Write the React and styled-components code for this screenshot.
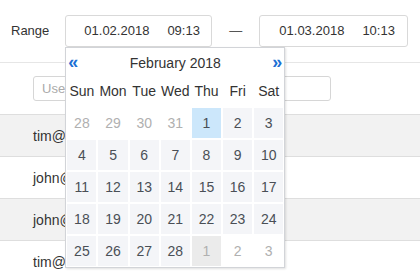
import React from "react";
import styled, { createGlobalStyle } from "styled-components";

const Global = createGlobalStyle`
  html, body { margin: 0; padding: 0; background: #fff; }
  body { font-family: "Liberation Sans", Arial, sans-serif; color: #333; }
`;

const Page = styled.div`
  width: 420px;
  height: 280px;
  overflow: hidden;
  position: relative;
`;

const Toolbar = styled.div`
  display: flex;
  align-items: center;
  height: 63px;
  padding: 15px 0 16px 11px;
  box-sizing: border-box;
  border-bottom: 1px solid #e6e6e6;
`;

const Label = styled.span`
  font-size: 13px;
  color: #333;
  margin-right: 16px;
`;

const Field = styled.div`
  position: relative;
`;

const DateBox = styled.div`
  display: flex;
  align-items: center;
  gap: 18px;
  width: ${(p) => p.$w}px;
  height: 32px;
  box-sizing: border-box;
  padding-left: ${(p) => p.$pl}px;
  border: 1px solid #d9d9d9;
  border-radius: 3px;
  font-size: 13px;
  color: #333;
  background: #fff;
`;

const Dash = styled.span`
  font-size: 13px;
  color: #555;
  margin: 0 17px;
`;

const Filter = styled.div`
  padding: 13px 0 13px 33px;
`;

const SearchInput = styled.input`
  display: block;
  width: 298px;
  height: 25px;
  box-sizing: border-box;
  border: 1px solid #d6d6d6;
  border-radius: 3px;
  padding: 0 8px;
  font-family: "Liberation Sans", Arial, sans-serif;
  font-size: 13px;
  outline: none;
  &::placeholder { color: #aaa; }
`;

const Table = styled.div`
  border-top: 1px solid #dedede;
`;

const Row = styled.div`
  display: flex;
  align-items: center;
  height: 41px;
  padding-left: 33px;
  border-bottom: 1px solid #dedede;
  background: ${(p) => (p.$alt ? "#f2f2f2" : "#fff")};
  font-size: 14px;
  color: #333;
`;

const Popup = styled.div`
  position: absolute;
  top: 32px;
  left: 0;
  width: 220px;
  box-sizing: border-box;
  background: #fff;
  border: 1px solid #d2d4d8;
  box-shadow: 1px 1px 2px rgba(0, 0, 0, 0.12);
  padding: 0 1px 1px 1px;
  z-index: 10;
`;

const Header = styled.div`
  display: flex;
  align-items: center;
  justify-content: space-between;
  height: 30px;
  padding: 0 1px;
`;

const Nav = styled.span`
  color: #1c6fd4;
  font-size: 18px;
  font-weight: bold;
  line-height: 1;
  margin-top: -2px;
`;

const Title = styled.span`
  font-size: 14px;
  color: #333;
`;

const Grid = styled.div`
  display: grid;
  grid-template-columns: repeat(7, 1fr);
  column-gap: 2px;
  row-gap: ${(p) => p.$rg}px;
  margin-top: ${(p) => p.$mt}px;
`;

const WeekDay = styled.div`
  height: 26px;
  display: flex;
  align-items: center;
  justify-content: center;
  font-size: 14px;
  color: #333;
`;

const Cell = styled.div`
  height: 30px;
  display: flex;
  align-items: center;
  justify-content: center;
  font-size: 14px;
  color: ${(p) => (p.$muted ? "#b0b0b0" : "#4a4f56")};
  background: ${(p) =>
    p.$selected ? "#cce7fb" : p.$today ? "#ebebeb" : p.$muted ? "#fff" : "#f4f5f8"};
`;

const days = [
  [28, "m"], [29, "m"], [30, "m"], [31, "m"], [1, "s"], [2], [3],
  [4], [5], [6], [7], [8], [9], [10],
  [11], [12], [13], [14], [15], [16], [17],
  [18], [19], [20], [21], [22], [23], [24],
  [25], [26], [27], [28], [1, "t"], [2, "m"], [3, "m"],
];

const weekDays = ["Sun", "Mon", "Tue", "Wed", "Thu", "Fri", "Sat"];

const rows = ["tim@mail.com", "john@mail.com", "john@mail.com", "tim@mail.com"];

export default function App() {
  return (
    <Page>
      <Global />
      <Toolbar>
        <Label>Range</Label>
        <Field>
          <DateBox $w={147} $pl={18}>
            <span>01.02.2018</span>
            <span>09:13</span>
          </DateBox>
          <Popup>
            <Header>
              <Nav>«</Nav>
              <Title>February 2018</Title>
              <Nav>»</Nav>
            </Header>
            <Grid $rg={0} $mt={0}>
              {weekDays.map((d) => (
                <WeekDay key={d}>{d}</WeekDay>
              ))}
            </Grid>
            <Grid $rg={2} $mt={4}>
              {days.map(([n, f], i) => (
                <Cell
                  key={i}
                  $muted={f === "m" || f === "t"}
                  $selected={f === "s"}
                  $today={f === "t"}
                >
                  {n}
                </Cell>
              ))}
            </Grid>
          </Popup>
        </Field>
        <Dash>—</Dash>
        <DateBox $w={149} $pl={19}>
          <span>01.03.2018</span>
          <span>10:13</span>
        </DateBox>
      </Toolbar>
      <Filter>
        <SearchInput placeholder="User" />
      </Filter>
      <Table>
        {rows.map((r, i) => (
          <Row key={i} $alt={i % 2 === 0}>
            {r}
          </Row>
        ))}
      </Table>
    </Page>
  );
}
